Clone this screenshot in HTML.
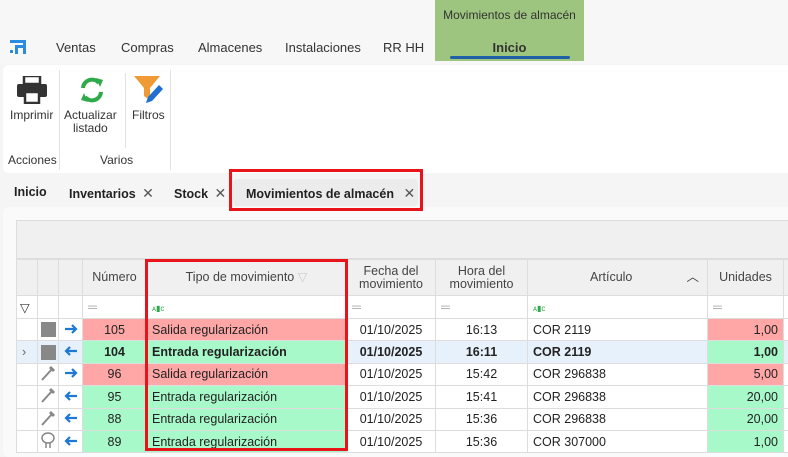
<!DOCTYPE html>
<html><head><meta charset="utf-8"><style>
*{margin:0;padding:0;box-sizing:border-box}
body{width:788px;height:449px;overflow:hidden;background:#f5f5f5;font-family:"Liberation Sans",sans-serif;color:#222;position:relative}
.a{position:absolute}
.nav{font-size:13px;color:#333;top:40px}
.ribbon{left:3px;top:65px;width:790px;height:108px;background:#fff;border-radius:6px}
.rl{font-size:12px;color:#333;text-align:center;line-height:13px}
.tab{top:185px;font-size:12.5px;font-weight:bold;color:#222}
.x{font-weight:normal;color:#555;font-size:14px}
table{position:absolute;left:16px;top:259px;width:787px;border-collapse:collapse;table-layout:fixed;font-size:12.5px;background:#fff}
td{border:1px solid #ddd;height:22.4px;padding:0 5px;white-space:nowrap;overflow:hidden}
th{border:1px solid #ddd;height:36px;font-weight:normal;background:#f0f0f0;color:#444;font-size:12.5px;line-height:13px;overflow:hidden}
.f td{height:23px;color:#aaa}
.r{background:#ffa6a6}.g{background:#a7f9c9}
.c{text-align:center}.rt{text-align:right}
.sel td{background:#e6f1fb;font-weight:bold}
.sel td.g{background:#a7f9c9}
.bl{text-align:center;padding:0}
.sq{display:inline-block;width:15px;height:15px;background:#888;vertical-align:middle}
.ic{padding:0;text-align:center;color:#777}
</style></head><body>
<div class="a" style="left:0;top:0;width:788px;height:64px;background:#f7f7f7"></div>
<div class="a" style="left:435px;top:0;width:149px;height:61px;background:#9dc57f"></div>
<div class="a" style="left:435px;top:8px;width:149px;text-align:center;font-size:12px;color:#333">Movimientos de almacén</div>
<div class="a" style="left:435px;top:40px;width:149px;text-align:center;font-size:13px;font-weight:bold;color:#333">Inicio</div>
<div class="a" style="left:450px;top:56px;width:120px;height:3px;background:#1e5fa8;border-radius:2px"></div>
<svg class="a" style="left:10px;top:40px" width="16" height="14"><rect x="0" y="0" width="16" height="3" fill="#2a8be0"/><rect x="5" y="5" width="3" height="9" fill="#2a8be0"/><rect x="5" y="5" width="8" height="3" fill="#2a8be0"/><rect x="13" y="0" width="3" height="14" fill="#2a8be0"/><rect x="0" y="10" width="3" height="3" fill="#2a8be0"/></svg>
<div class="a nav" style="left:56px">Ventas</div>
<div class="a nav" style="left:121px">Compras</div>
<div class="a nav" style="left:198px">Almacenes</div>
<div class="a nav" style="left:285px">Instalaciones</div>
<div class="a nav" style="left:383px">RR HH</div>
<div class="a ribbon"></div>
<div class="a" style="left:59px;top:70px;width:1px;height:100px;background:#e2e2e2"></div>
<div class="a" style="left:125px;top:73px;width:1px;height:75px;background:#e2e2e2"></div>
<div class="a" style="left:170px;top:70px;width:1px;height:100px;background:#e2e2e2"></div>
<svg class="a" style="left:17px;top:76px" width="30" height="28"><rect x="7" y="0" width="16" height="8" fill="none" stroke="#333" stroke-width="2.5"/><rect x="0" y="8" width="30" height="13" rx="2" fill="#333"/><rect x="8" y="16" width="14" height="11" fill="#fff" stroke="#333" stroke-width="2.5"/></svg>
<svg class="a" style="left:79px;top:77px" width="26" height="26" viewBox="0 0 26 26"><path d="M4 11 A9 9 0 0 1 20 6" fill="none" stroke="#2eaa4a" stroke-width="4"/><path d="M17 1 L24 3 L21 10 Z" fill="#2eaa4a"/><path d="M22 15 A9 9 0 0 1 6 20" fill="none" stroke="#2eaa4a" stroke-width="4"/><path d="M9 25 L2 23 L5 16 Z" fill="#2eaa4a"/></svg>
<svg class="a" style="left:134px;top:76px" width="30" height="30"><path d="M0 0 H26 L16 12 V24 L10 20 V12 Z" fill="#f09a35"/><path d="M12 27 L14 21 L25 9 L29 13 L18 25 Z" fill="#1e6fd0"/></svg>
<div class="a rl" style="left:10px;top:109px">Imprimir</div>
<div class="a rl" style="left:64px;top:109px">Actualizar<br>listado</div>
<div class="a rl" style="left:132px;top:109px">Filtros</div>
<div class="a rl" style="left:8px;top:154px">Acciones</div>
<div class="a rl" style="left:100px;top:154px">Varios</div>
<div class="a" style="left:3px;top:207px;width:790px;height:250px;background:#fafafa;border-radius:6px"></div>
<div class="a tab" style="left:14px">Inicio</div>
<div class="a tab" style="left:69px">Inventarios <span class="x" style="margin-left:3px">✕</span></div>
<div class="a tab" style="left:174px">Stock <span class="x" style="margin-left:3px">✕</span></div>
<div class="a" style="left:233px;top:179px;width:185px;height:27px;background:#ececec;border-radius:4px"></div>
<div class="a tab" style="left:246px">Movimientos de almacén <span class="x" style="margin-left:6px">✕</span></div>
<div class="a" style="left:229px;top:169px;width:194px;height:42px;border:3px solid #e8141a"></div>
<div class="a" style="left:16px;top:220px;width:780px;height:39px;background:#f0f0f0;border:1px solid #ddd"></div>
<table>
<colgroup><col style="width:21px"><col style="width:21px"><col style="width:24px"><col style="width:64px"><col style="width:200px"><col style="width:89px"><col style="width:92px"><col style="width:180px"><col style="width:76px"><col style="width:20px"></colgroup>
<tr><th></th><th></th><th></th><th>Número</th><th>Tipo de movimiento <span style="color:#ccc">▽</span></th><th>Fecha del<br>movimiento</th><th>Hora del<br>movimiento</th><th style="text-align:left;padding-left:62px">Artículo <span style="float:right;margin-right:8px">︿</span></th><th>Unidades</th><th></th></tr>
<tr class="f"><td style="color:#333;padding:0 3px">▽</td><td></td><td></td><td>═</td><td><span style="color:#2eaa4a;font-size:8px">ᴀ▮ᴄ</span></td><td>═</td><td>═</td><td><span style="color:#2eaa4a;font-size:8px">ᴀ▮ᴄ</span></td><td>═</td><td></td></tr>
<tr><td></td><td class="ic"><span class="sq"></span></td><td class="bl"><svg width="14" height="10"><path d="M1 5H12M8 1L12 5L8 9" fill="none" stroke="#1e78d6" stroke-width="2.2"/></svg></td><td class="c r">105</td><td class="r">Salida regularización</td><td class="c">01/10/2025</td><td class="c">16:13</td><td>COR 2119</td><td class="rt r">1,00</td><td></td></tr>
<tr class="sel"><td style="color:#666;font-weight:normal">›</td><td class="ic"><span class="sq"></span></td><td class="bl"><svg width="14" height="10"><path d="M13 5H2M6 1L2 5L6 9" fill="none" stroke="#1e78d6" stroke-width="2.2"/></svg></td><td class="c g">104</td><td class="g">Entrada regularización</td><td class="c">01/10/2025</td><td class="c">16:11</td><td>COR 2119</td><td class="rt g">1,00</td><td></td></tr>
<tr><td></td><td class="ic"><svg width="16" height="16"><path d="M2 15L12 4" stroke="#888" stroke-width="2"/><path d="M10 2L14 6" stroke="#888" stroke-width="3"/></svg></td><td class="bl"><svg width="14" height="10"><path d="M1 5H12M8 1L12 5L8 9" fill="none" stroke="#1e78d6" stroke-width="2.2"/></svg></td><td class="c r">96</td><td class="r">Salida regularización</td><td class="c">01/10/2025</td><td class="c">15:42</td><td>COR 296838</td><td class="rt r">5,00</td><td></td></tr>
<tr><td></td><td class="ic"><svg width="16" height="16"><path d="M2 15L12 4" stroke="#888" stroke-width="2"/><path d="M10 2L14 6" stroke="#888" stroke-width="3"/></svg></td><td class="bl"><svg width="14" height="10"><path d="M13 5H2M6 1L2 5L6 9" fill="none" stroke="#1e78d6" stroke-width="2.2"/></svg></td><td class="c g">95</td><td class="g">Entrada regularización</td><td class="c">01/10/2025</td><td class="c">15:41</td><td>COR 296838</td><td class="rt g">20,00</td><td></td></tr>
<tr><td></td><td class="ic"><svg width="16" height="16"><path d="M2 15L12 4" stroke="#888" stroke-width="2"/><path d="M10 2L14 6" stroke="#888" stroke-width="3"/></svg></td><td class="bl"><svg width="14" height="10"><path d="M13 5H2M6 1L2 5L6 9" fill="none" stroke="#1e78d6" stroke-width="2.2"/></svg></td><td class="c g">88</td><td class="g">Entrada regularización</td><td class="c">01/10/2025</td><td class="c">15:36</td><td>COR 296838</td><td class="rt g">20,00</td><td></td></tr>
<tr><td></td><td class="ic"><svg width="16" height="16"><ellipse cx="8" cy="6" rx="6" ry="5" fill="none" stroke="#888" stroke-width="1.5"/><path d="M6 11V16M10 11V16" stroke="#888" stroke-width="1.5"/></svg></td><td class="bl"><svg width="14" height="10"><path d="M13 5H2M6 1L2 5L6 9" fill="none" stroke="#1e78d6" stroke-width="2.2"/></svg></td><td class="c g">89</td><td class="g">Entrada regularización</td><td class="c">01/10/2025</td><td class="c">15:36</td><td>COR 307000</td><td class="rt g">1,00</td><td></td></tr>
</table>
<div class="a" style="left:145px;top:259px;width:203px;height:192px;border:3px solid #e8141a"></div>
</body></html>
